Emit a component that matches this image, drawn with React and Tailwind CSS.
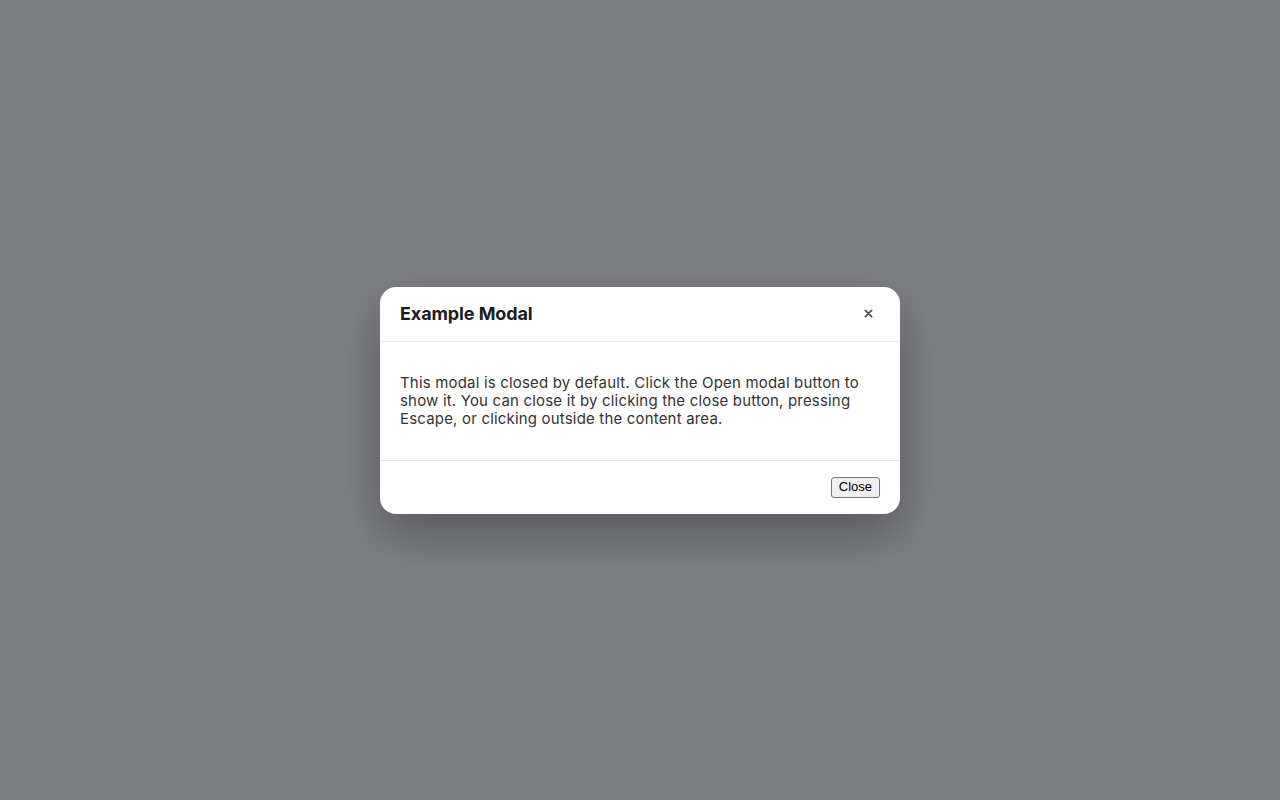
import React, { useEffect, useState } from 'react';

const Modal = ({ open, onClose, title, children }) => {
  useEffect(() => {
    const onKey = (e) => {
      if (e.key === 'Escape') onClose();
    };
    window.addEventListener('keydown', onKey);
    return () => window.removeEventListener('keydown', onKey);
  }, [onClose]);

  if (!open) return null;

  return (
    <div
      className="fixed inset-0 flex items-center justify-center bg-[#7e7f82]"
      onClick={onClose}
    >
      <div
        className="w-[520px] rounded-2xl bg-white shadow-[0_20px_50px_rgba(0,0,0,0.3)]"
        onClick={(e) => e.stopPropagation()}
      >
        <div className="flex h-[55px] items-center justify-between border-b border-[#e8e8e8] px-5">
          <h2 className="text-[18px] font-bold tracking-[-0.1px] text-[#1c1c1e]">{title}</h2>
          <button
            onClick={onClose}
            className="flex h-6 w-6 items-center justify-center text-[#555]"
            aria-label="Close"
          >
            <svg width="9" height="9" viewBox="0 0 10 10">
              <path d="M1.5 1.5L8.5 8.5M8.5 1.5L1.5 8.5" stroke="currentColor" strokeWidth="2" strokeLinecap="round" />
            </svg>
          </button>
        </div>
        <div className="px-5 py-8 text-[15px] leading-[18px] tracking-[0.18px] text-[#333]">{children}</div>
        <div className="flex justify-end border-t border-[#e8e8e8] px-5 py-4">
          <button
            onClick={onClose}
            className="h-[21px] rounded-[3px] border border-[#767676] bg-[#efefef] px-[7px] text-[13px] leading-[16px] text-black [font-family:'Liberation_Sans',Arial,sans-serif]"
          >
            Close
          </button>
        </div>
      </div>
    </div>
  );
};

export default function App() {
  const [open, setOpen] = useState(true);

  return (
    <div className="min-h-screen bg-[#7e7f82] [font-family:Inter,'Noto_Sans',sans-serif]">
      {!open && (
        <button onClick={() => setOpen(true)} className="m-4 rounded border px-3 py-1">
          Open modal
        </button>
      )}
      <Modal open={open} onClose={() => setOpen(false)} title="Example Modal">
        <p>
          This modal is closed by default. Click the Open modal button to show it. You can
          close it by clicking the close button, pressing Escape, or clicking outside the
          content area.
        </p>
      </Modal>
    </div>
  );
}
